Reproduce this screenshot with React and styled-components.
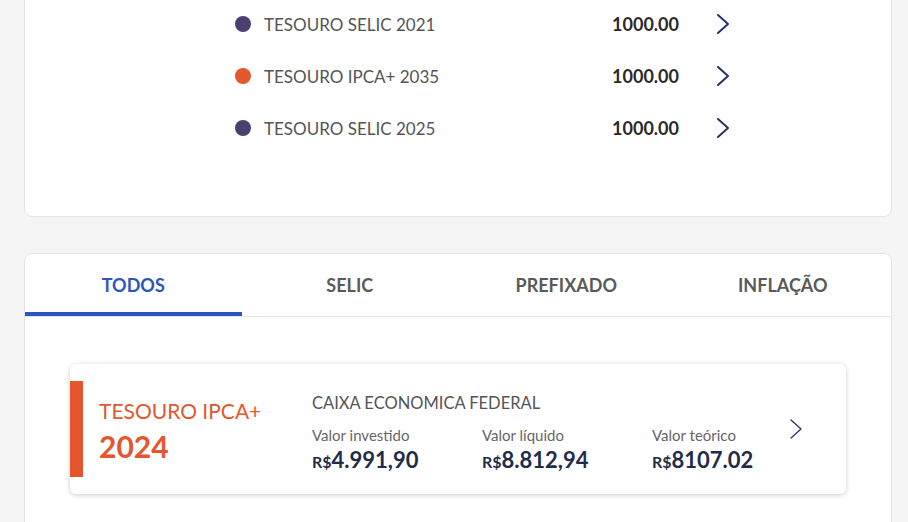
import React, { useState } from "react";
import styled, { createGlobalStyle } from "styled-components";

const GlobalStyle = createGlobalStyle`
  body {
    margin: 0;
    background: #f4f5f4;
    font-family: "Lato", "Noto Sans", sans-serif;
    overflow: hidden;
  }
`;

export const Page = styled.div`
  padding: 0 16px 40px 24px;
`;

export const Card = styled.div`
  background: #ffffff;
  border: 1px solid #e4e6e4;
  border-radius: 8px;
`;

export const TopCard = styled(Card)`
  margin-top: -20px;
  padding: 17px 0 62px;
`;

export const Row = styled.div`
  display: flex;
  align-items: center;
  height: 52px;
  padding: 0 162px 0 210px;
`;

export const Dot = styled.span`
  width: 16px;
  height: 16px;
  border-radius: 50%;
  background: ${(p) => p.color};
  margin-right: 13px;
  flex-shrink: 0;
`;

export const Name = styled.span`
  flex: 1;
  font-size: 17px;
  color: #555555;
`;

export const Amount = styled.span`
  font-size: 18px;
  font-weight: 700;
  color: #2a2a2a;
`;

export const Chevron = ({ w = 12, h = 20, stroke = 2, color = "#2a3166" }) => (
  <svg width={w} height={h} viewBox={`0 0 ${w} ${h}`} fill="none">
    <polyline
      points={`1,1 ${w - 1},${h / 2} 1,${h - 1}`}
      stroke={color}
      strokeWidth={stroke}
      strokeLinecap="round"
      strokeLinejoin="round"
    />
  </svg>
);

export const ChevronBox = styled.span`
  display: flex;
  flex-shrink: 0;
  margin-left: ${(p) => p.gap || 38}px;
`;

export const ListCard = styled(Card)`
  margin-top: 36px;
  overflow: hidden;
`;

export const Tabs = styled.div`
  display: grid;
  grid-template-columns: repeat(4, 1fr);
  border-bottom: 1px solid #e4e6e4;
`;

export const Tab = styled.button`
  height: 62px;
  border: none;
  background: none;
  padding: 4px 0 0;
  font-family: inherit;
  font-size: 18px;
  font-weight: 700;
  color: ${(p) => (p.active ? "#2b56c2" : "#5a5a5a")};
  border-bottom: 4px solid ${(p) => (p.active ? "#2b56c2" : "transparent")};
  cursor: pointer;
`;

export const Body = styled.div`
  padding: 47px 45px 40px;
`;

export const Bond = styled.div`
  display: flex;
  align-items: center;
  height: 130px;
  background: #ffffff;
  border-radius: 6px;
  box-shadow: 0 1px 5px rgba(0, 0, 0, 0.2);
  padding-right: 44px;
`;

export const Bar = styled.div`
  width: 13px;
  height: 96px;
  background: #e4572e;
  flex-shrink: 0;
`;

export const BondTitle = styled.div`
  width: 213px;
  flex-shrink: 0;
  margin-left: 16px;
  padding-top: 4px;
  color: #e4572e;
`;

export const TitleName = styled.div`
  font-size: 21px;
  line-height: 26px;
  margin-bottom: 4px;
`;

export const TitleYear = styled.div`
  font-size: 30px;
  font-weight: 700;
  line-height: 36px;
`;

export const Details = styled.div`
  flex: 1;
  padding-top: 10px;
`;

export const Issuer = styled.div`
  font-size: 16.5px;
  color: #555555;
  line-height: 22px;
  margin-bottom: 11px;
`;

export const Values = styled.div`
  display: grid;
  grid-template-columns: 170px 170px auto;
`;

export const Label = styled.div`
  font-size: 15px;
  color: #666666;
  line-height: 20px;
`;

export const Money = styled.div`
  font-size: 22px;
  font-weight: 700;
  color: #1f2d4a;
  line-height: 30px;
  small {
    font-size: 16px;
  }
`;

const titles = [
  { name: "TESOURO SELIC 2021", color: "#4b3f72" },
  { name: "TESOURO IPCA+ 2035", color: "#e4572e" },
  { name: "TESOURO SELIC 2025", color: "#4b3f72" },
];

const tabs = ["TODOS", "SELIC", "PREFIXADO", "INFLAÇÃO"];

const values = [
  { label: "Valor investido", value: "4.991,90" },
  { label: "Valor líquido", value: "8.812,94" },
  { label: "Valor teórico", value: "8107.02" },
];

export default function App() {
  const [tab, setTab] = useState(0);
  return (
    <Page>
      <GlobalStyle />
      <TopCard>
        {titles.map((t) => (
          <Row key={t.name}>
            <Dot color={t.color} />
            <Name>{t.name}</Name>
            <Amount>1000.00</Amount>
            <ChevronBox>
              <Chevron />
            </ChevronBox>
          </Row>
        ))}
      </TopCard>
      <ListCard>
        <Tabs>
          {tabs.map((t, i) => (
            <Tab key={t} active={i === tab} onClick={() => setTab(i)}>
              {t}
            </Tab>
          ))}
        </Tabs>
        <Body>
          <Bond>
            <Bar />
            <BondTitle>
              <TitleName>TESOURO IPCA+</TitleName>
              <TitleYear>2024</TitleYear>
            </BondTitle>
            <Details>
              <Issuer>CAIXA ECONOMICA FEDERAL</Issuer>
              <Values>
                {values.map((v) => (
                  <div key={v.label}>
                    <Label>{v.label}</Label>
                    <Money>
                      <small>R$</small>
                      {v.value}
                    </Money>
                  </div>
                ))}
              </Values>
            </Details>
            <ChevronBox gap={1}>
              <Chevron w={12} h={20} stroke={1.3} color="#2a3166" />
            </ChevronBox>
          </Bond>
        </Body>
      </ListCard>
    </Page>
  );
}
